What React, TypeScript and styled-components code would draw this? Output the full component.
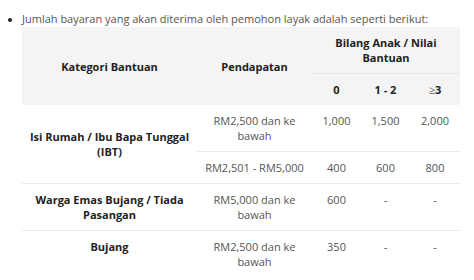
import React from 'react'
import styled, { createGlobalStyle } from 'styled-components'

const GlobalStyle = createGlobalStyle`
    html, body {
        margin: 0;
        padding: 0;
        background: #ffffff;
    }
    body {
        font-family: 'Open Sans', 'Liberation Sans', sans-serif;
        color: #555555;
    }
`

const Page = styled.div`
    padding: 11px 0 0 0;
    width: 474px;
`

const List = styled.ul`
    margin: 0;
    padding: 0 0 0 22px;
    list-style: disc;
`

const Item = styled.li`
    font-size: 11px;
    line-height: 16px;
    color: #555555;

    &::marker {
        color: #222222;
        font-size: 10px;
    }
`

const Table = styled.table`
    margin-top: 0;
    width: 438px;
    border-collapse: collapse;
    table-layout: fixed;
    font-size: 11px;
    line-height: 15px;
`

const Head = styled.thead`
    background: #f4f4f4;
`

const Th = styled.th<{ $line?: boolean }>`
    padding: 8px 4px;
    font-weight: 700;
    color: #222222;
    text-align: center;
    vertical-align: middle;
    border-bottom: ${({ $line }) => ($line ? '1px solid #e6e6e6' : 'none')};
`

const Soft = styled.span`
    font-weight: 400;
    color: #666666;
`

const Cell = styled.td<{ $strong?: boolean; $top?: boolean }>`
    padding: 8px 4px;
    text-align: center;
    vertical-align: ${({ $top }) => ($top ? 'top' : 'middle')};
    font-weight: ${({ $strong }) => ($strong ? 700 : 400)};
    color: ${({ $strong }) => ($strong ? '#222222' : '#555555')};
`

const SubRow = styled.tr`
    border-top: 1px solid #ebebeb;
`

const App = () => {
    return (
        <>
            <GlobalStyle />
            <Page>
                <List>
                    <Item>
                        Jumlah bayaran yang akan diterima oleh pemohon layak
                        adalah seperti berikut:
                    </Item>
                </List>
                <List as="div">
                    <Table>
                        <colgroup>
                            <col style={{ width: 175 }} />
                            <col style={{ width: 115 }} />
                            <col style={{ width: 49 }} />
                            <col style={{ width: 49 }} />
                            <col style={{ width: 50 }} />
                        </colgroup>
                        <Head>
                            <tr>
                                <Th rowSpan={2}>Kategori Bantuan</Th>
                                <Th rowSpan={2}>Pendapatan</Th>
                                <Th colSpan={3} $line>
                                    Bilang Anak / Nilai
                                    <br />
                                    Bantuan
                                </Th>
                            </tr>
                            <tr>
                                <Th>0</Th>
                                <Th>1 - 2</Th>
                                <Th>
                                    <Soft>≥</Soft>3
                                </Th>
                            </tr>
                        </Head>
                        <tbody>
                            <tr>
                                <Cell rowSpan={2} $strong>
                                    Isi Rumah / Ibu Bapa Tunggal
                                    <br />
                                    (IBT)
                                </Cell>
                                <Cell>
                                    RM2,500 dan ke
                                    <br />
                                    bawah
                                </Cell>
                                <Cell $top>1,000</Cell>
                                <Cell $top>1,500</Cell>
                                <Cell $top>2,000</Cell>
                            </tr>
                            <SubRow>
                                <Cell>RM2,501 - RM5,000</Cell>
                                <Cell>400</Cell>
                                <Cell>600</Cell>
                                <Cell>800</Cell>
                            </SubRow>
                            <SubRow>
                                <Cell $strong>
                                    Warga Emas Bujang / Tiada
                                    <br />
                                    Pasangan
                                </Cell>
                                <Cell>
                                    RM5,000 dan ke
                                    <br />
                                    bawah
                                </Cell>
                                <Cell $top>600</Cell>
                                <Cell $top>-</Cell>
                                <Cell $top>-</Cell>
                            </SubRow>
                            <SubRow>
                                <Cell $strong $top>
                                    Bujang
                                </Cell>
                                <Cell>
                                    RM2,500 dan ke
                                    <br />
                                    bawah
                                </Cell>
                                <Cell $top>350</Cell>
                                <Cell $top>-</Cell>
                                <Cell $top>-</Cell>
                            </SubRow>
                        </tbody>
                    </Table>
                </List>
            </Page>
        </>
    )
}

export default App
